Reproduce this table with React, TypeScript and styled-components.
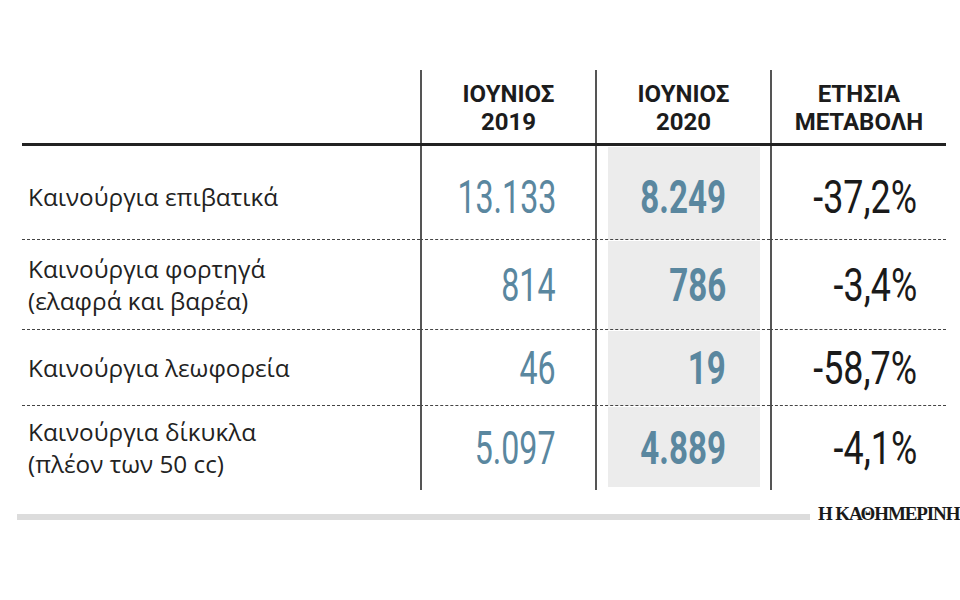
import React from "react";
import styled, { createGlobalStyle } from "styled-components";

const Global = createGlobalStyle`
  html, body { margin: 0; padding: 0; background: #ffffff; }
  body { width: 960px; height: 600px; overflow: hidden; font-family: "Roboto", "Liberation Sans", sans-serif; }
`;

const COLS = "398px 175px 175px 176px";

const Page = styled.div`
  width: 960px;
  height: 600px;
  padding-top: 70px;
  box-sizing: border-box;
`;

const Table = styled.div`
  margin-left: 22px;
  width: 924px;
`;

const HeadRow = styled.div`
  display: grid;
  grid-template-columns: ${COLS};
  height: 76px;
  box-sizing: border-box;
  border-bottom: 3px solid #222;
`;

const HeadCell = styled.div<{ $line?: boolean }>`
  border-left: ${(p) => (p.$line ? "2px solid #555" : "none")};
  display: flex;
  align-items: center;
  justify-content: center;
  padding-top: 3px;
  text-align: center;
  font-family: "Roboto", "Liberation Sans", sans-serif;
  font-weight: 700;
  font-size: 24px;
  line-height: 28px;
  color: #1c1c1c;
`;

const Row = styled.div<{ $h: number }>`
  display: grid;
  grid-template-columns: ${COLS};
  height: ${(p) => p.$h}px;
`;

const Cell = styled.div<{ $last?: boolean; $pt?: number }>`
  box-sizing: border-box;
  border-bottom: ${(p) => (p.$last ? "none" : "1px dashed #444")};
  padding-top: ${(p) => p.$pt ?? 0}px;
  display: flex;
  align-items: center;
`;

const LabelCell = styled(Cell)`
  padding-left: 6px;
  font-family: "Open Sans", "Noto Sans", sans-serif;
  font-weight: 400;
  font-size: 24.3px;
  line-height: 32px;
  color: #222;
`;

const NumCell = styled(Cell)<{ $pr: number; $shade?: boolean }>`
  border-left: 2px solid #555;
  justify-content: flex-end;
  padding-right: ${(p) => p.$pr}px;
  background-image: ${(p) =>
    p.$shade ? "linear-gradient(#ececec, #ececec)" : "none"};
  background-origin: border-box;
  background-clip: border-box;
  background-repeat: no-repeat;
  background-position: 13px 1px;
  background-size: 152px ${(p) => (p.$last ? "calc(100% - 4px)" : "100%")};
`;

const Num = styled.span<{ $weight: number; $color: string; $sx: number }>`
  display: inline-block;
  font-family: "Roboto", "Liberation Sans", sans-serif;
  font-weight: ${(p) => p.$weight};
  font-size: 46px;
  line-height: 48px;
  color: ${(p) => p.$color};
  transform: scaleX(${(p) => p.$sx});
  transform-origin: right center;
  white-space: nowrap;
`;

const Footer = styled.div`
  display: flex;
  align-items: flex-end;
  margin-top: 14px;
  padding-left: 17px;
  gap: 8px;
  height: 19px;
`;

const Bar = styled.div`
  width: 793px;
  height: 6px;
  margin-bottom: 3px;
  background: #dcdcdc;
`;

const Logo = styled.div`
  font-family: "Liberation Serif", "DejaVu Serif", serif;
  font-weight: 700;
  font-size: 19px;
  line-height: 19px;
  letter-spacing: -1.1px;
  color: #1a1a1a;
  white-space: nowrap;
`;

type RowData = {
  label: string[];
  a: string;
  b: string;
  c: string;
  h: number;
  pt?: number;
};

const BLUE = "#5a879f";

const rows: RowData[] = [
  { label: ["Καινούργια επιβατικά"], a: "13.133", b: "8.249", c: "-37,2%", h: 94, pt: 8 },
  { label: ["Καινούργια φορτηγά", "(ελαφρά και βαρέα)"], a: "814", b: "786", c: "-3,4%", h: 90 },
  { label: ["Καινούργια λεωφορεία"], a: "46", b: "19", c: "-58,7%", h: 76 },
  { label: ["Καινούργια δίκυκλα", "(πλέον των 50 cc)"], a: "5.097", b: "4.889", c: "-4,1%", h: 84 },
];

export default function App() {
  return (
    <>
      <Global />
      <Page>
        <Table>
          <HeadRow>
            <HeadCell />
            <HeadCell $line>
              ΙΟΥΝΙΟΣ
              <br />
              2019
            </HeadCell>
            <HeadCell $line>
              ΙΟΥΝΙΟΣ
              <br />
              2020
            </HeadCell>
            <HeadCell $line>
              ΕΤΗΣΙΑ
              <br />
              ΜΕΤΑΒΟΛΗ
            </HeadCell>
          </HeadRow>
          {rows.map((r, i) => {
            const last = i === rows.length - 1;
            return (
              <Row key={i} $h={r.h}>
                <LabelCell $last={last} $pt={r.pt}>
                  <div>
                    {r.label.map((l, j) => (
                      <div key={j}>{l}</div>
                    ))}
                  </div>
                </LabelCell>
                <NumCell $last={last} $pt={r.pt} $pr={39}>
                  <Num $weight={400} $color={BLUE} $sx={0.7}>{r.a}</Num>
                </NumCell>
                <NumCell $last={last} $pt={r.pt} $pr={44} $shade>
                  <Num $weight={700} $color={BLUE} $sx={0.72}>{r.b}</Num>
                </NumCell>
                <NumCell $last={last} $pt={r.pt} $pr={29}>
                  <Num $weight={400} $color="#1a1a1a" $sx={0.78}>{r.c}</Num>
                </NumCell>
              </Row>
            );
          })}
        </Table>
        <Footer>
          <Bar />
          <Logo>Η ΚΑΘΗΜΕΡΙΝΗ</Logo>
        </Footer>
      </Page>
    </>
  );
}
